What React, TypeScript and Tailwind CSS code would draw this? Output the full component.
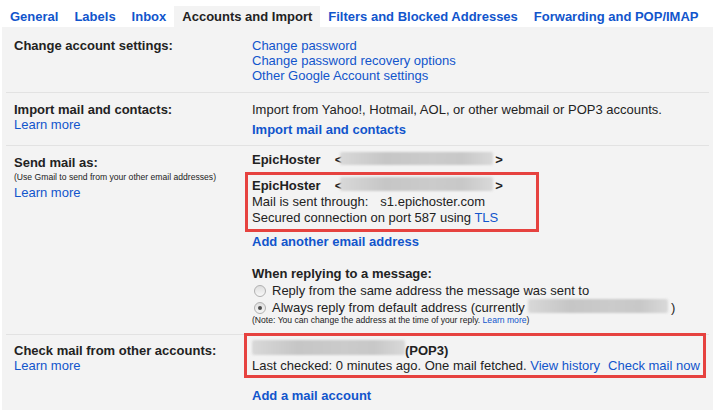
import React from "react";

const LINK = "text-[#1155cc]";

function Blur({ w, h = 13 }: { w: number; h?: number }) {
  return (
    <span
      className="inline-block shrink-0 rounded-[2px] blur-[1.2px] bg-[linear-gradient(90deg,#d8d8d8,#c6c6c6_30%,#cbcbcb_60%,#c8c8c8_80%,#d9d9d9)]"
      style={{ width: w, height: h }}
    />
  );
}

function Radio({ checked }: { checked?: boolean }) {
  return (
    <span className="ml-[2px] mr-[6px] inline-flex h-[12px] w-[12px] shrink-0 items-center justify-center rounded-full border border-[#b0b0b0] bg-[linear-gradient(180deg,#dedede,#f7f7f7)]">
      {checked && <span className="h-[4px] w-[4px] rounded-full bg-[#4a4a4a]" />}
    </span>
  );
}

export default function App() {
  const tabs = [
    "General",
    "Labels",
    "Inbox",
    "Accounts and Import",
    "Filters and Blocked Addresses",
    "Forwarding and POP/IMAP",
  ];
  return (
    <div className="h-[410px] w-[713px] overflow-hidden bg-white font-['Liberation_Sans',Arial,sans-serif] text-[13px] leading-[15px] text-[#222]">
      <div className="flex h-[27px] pl-[2px] pt-[6px] font-bold">
        {tabs.map((t) => (
          <div
            key={t}
            className={
              t === "Accounts and Import"
                ? "h-[21px] whitespace-nowrap bg-[#f3f3f3] px-2 pt-[3px] text-[#222]"
                : "h-[21px] whitespace-nowrap px-2 pt-[3px] text-[#1155cc]"
            }
          >
            {t}
          </div>
        ))}
      </div>

      <div className="ml-[2px] h-[383px] bg-[#f3f3f3] px-[4px] pt-[2px]">
        {/* Row 1 */}
        <div className="grid grid-cols-[246px_1fr] border-b border-[#e2e2e2] pb-[9px] pt-[9px]">
          <div className="pl-[8px] font-bold">Change account settings:</div>
          <div className={LINK}>
            <div>Change password</div>
            <div>Change password recovery options</div>
            <div>Other Google Account settings</div>
          </div>
        </div>

        {/* Row 2 */}
        <div className="grid grid-cols-[246px_1fr] border-b border-[#e2e2e2] pb-[8px] pt-[9px]">
          <div className="pl-[8px]">
            <div className="font-bold">Import mail and contacts:</div>
            <div className={LINK}>Learn more</div>
          </div>
          <div>
            <div>Import from Yahoo!, Hotmail, AOL, or other webmail or POP3 accounts.</div>
            <div className={`mt-[5px] font-bold ${LINK}`}>Import mail and contacts</div>
          </div>
        </div>

        {/* Row 3 */}
        <div className="grid grid-cols-[246px_1fr] border-b border-[#e2e2e2] pb-[8px] pt-[9px]">
          <div className="pl-[8px]">
            <div className="font-bold">Send mail as:</div>
            <div className="text-[8.6px] leading-[15px]">
              (Use Gmail to send from your other email addresses)
            </div>
            <div className={LINK}>Learn more</div>
          </div>
          <div className="-mt-[3px]">
            <div className="flex h-[15px] items-center font-bold">
              <span>EpicHoster</span>
              <span className="ml-[14px]">&lt;</span>
              <span className="-ml-[2px]">
                <Blur w={153} />
              </span>
              <span className="ml-[2px]">&gt;</span>
            </div>
            <div className="relative mt-[11px] leading-[16px]">
              <div className="flex h-[16px] items-center font-bold">
                <span>EpicHoster</span>
                <span className="ml-[14px]">&lt;</span>
                <span className="-ml-[2px]">
                  <Blur w={153} h={14} />
                </span>
                <span className="ml-[2px]">&gt;</span>
              </div>
              <div>
                Mail is sent through:<span className="ml-[12px]">s1.epichoster.com</span>
              </div>
              <div>
                Secured connection on port 587 using <span className={LINK}>TLS</span>
              </div>
              <div className="pointer-events-none absolute -bottom-[6px] -left-[7px] -top-[6px] w-[294px] border-[3px] border-[#e6423f]" />
            </div>
            <div className={`mt-[8px] font-bold ${LINK}`}>Add another email address</div>
            <div className="mt-[17px] font-bold">When replying to a message:</div>
            <div className="mt-[1px] flex h-[17px] items-center">
              <Radio />
              <span>Reply from the same address the message was sent to</span>
            </div>
            <div className="flex h-[17px] items-center">
              <Radio checked />
              <span>Always reply from default address (currently</span>
              <span className="ml-[3px]">
                <Blur w={140} h={14} />
              </span>
              <span className="ml-[3px]">)</span>
            </div>
            <div className="-mt-[2px] text-[8.6px] leading-[12px]">
              (Note: You can change the address at the time of your reply.{" "}
              <span className={LINK}>Learn more</span>)
            </div>
          </div>
        </div>

        {/* Row 4 */}
        <div className="grid grid-cols-[246px_1fr] pt-[8px]">
          <div className="pl-[8px]">
            <div className="font-bold">Check mail from other accounts:</div>
            <div className={LINK}>Learn more</div>
          </div>
          <div>
            <div className="relative">
              <div className="flex h-[15px] items-center">
                <span className="-mt-[3px]">
                  <Blur w={153} h={15} />
                </span>
                <span className="font-bold">(POP3)</span>
              </div>
              <div className="whitespace-nowrap">
                Last checked: 0 minutes ago. One mail fetched.{" "}
                <span className={LINK}>View history</span>
                <span className={`ml-[8px] ${LINK}`}>Check mail now</span>
              </div>
              <div className="pointer-events-none absolute -bottom-[5px] -left-[8px] -top-[10px] w-[462px] border-[3px] border-[#e6423f]" />
            </div>
            <div className={`mt-[15px] font-bold ${LINK}`}>Add a mail account</div>
          </div>
        </div>
      </div>
    </div>
  );
}
